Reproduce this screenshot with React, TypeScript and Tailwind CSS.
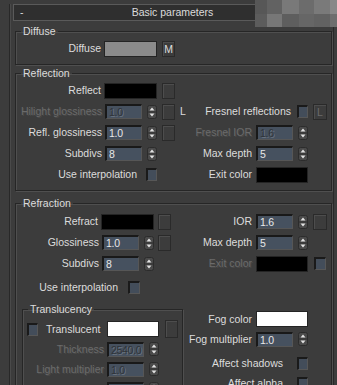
import React from "react";

type Node = React.ReactNode;

const Label = ({ children, off, className = "" }: { children: Node; off?: boolean; className?: string }) => (
  <span
    className={`whitespace-nowrap leading-[13px] ${
      off ? "text-[#6b6b6b] [text-shadow:1px_1px_0_#4a4a4a]" : "text-[#dcdcdc]"
    } ${className}`}
  >
    {children}
  </span>
);

const Swatch = ({ className }: { className: string }) => (
  <div className={`h-[16px] border border-[#242424] ${className}`} />
);

const Arrows = () => (
  <svg width="10" height="14" viewBox="0 0 10 14">
    <rect x="0.5" y="0.5" width="9" height="13" rx="2" fill="#4a4a4a" stroke="#2c2c2c" />
    <line x1="1" y1="7" x2="9" y2="7" stroke="#2c2c2c" />
    <polygon points="2.5,5.5 5,2.5 7.5,5.5" fill="#e2e2e2" />
    <polygon points="2.5,8.5 5,11.5 7.5,8.5" fill="#e2e2e2" />
  </svg>
);

const Spinner = ({ value, off }: { value: string; off?: boolean }) => (
  <div className="flex items-center gap-[5px]">
    <div
      className={`h-[15px] w-[37px] overflow-hidden whitespace-nowrap border-t-2 border-l-2 border-r border-b border-t-[#191919] border-l-[#191919] border-r-[#565656] border-b-[#565656] bg-[#46515f] pl-[2px] leading-[12px] tracking-[-0.3px] ${
        off ? "text-[#2f3338] [text-shadow:1px_1px_0_#6a7480]" : "text-[#e8e8e8]"
      }`}
    >
      {value}
    </div>
    <Arrows />
  </div>
);

const Check = ({ className = "" }: { className?: string }) => (
  <div
    className={`h-[13px] w-[11px] border-t-2 border-l-2 border-r border-b border-t-[#1a1a1a] border-l-[#1a1a1a] border-r-[#575757] border-b-[#575757] bg-[#434d5a] ${className}`}
  />
);

const Btn = ({ children, className = "" }: { children?: Node; className?: string }) => (
  <div
    className={`flex h-[16px] items-center justify-center border border-[#2a2a2a] shadow-[inset_1px_1px_0_#4d4d4d] leading-[12px] ${className}`}
  >
    {children}
  </div>
);

type RowProps = {
  left?: Node;
  btn?: Node;
  l?: Node;
  right?: Node;
  extra?: Node;
  lw?: string;
  bm?: string;
  h?: string;
};

const Row = ({ left, btn, l, right, extra, lw = "w-[141px]", bm = "ml-[5px]", h = "h-[21px]" }: RowProps) => (
  <div className={`flex items-center ${h}`}>
    <div className={`flex items-center justify-end gap-[3px] ${lw}`}>{left}</div>
    <div className={`w-[13px] ${bm}`}>{btn}</div>
    <div className="ml-[5px] w-[10px] text-[#dcdcdc]">{l}</div>
    <div className="ml-auto mr-[4px] flex items-center">
      <div className="flex w-[118px] items-center justify-end gap-[4px]">{right}</div>
      <div className="ml-[5px] w-[14px]">{extra}</div>
    </div>
  </div>
);

const Group = ({ title, children, className = "" }: { title: string; children: Node; className?: string }) => (
  <fieldset
    className={`border border-[#262626] shadow-[1px_1px_0_#4f4f4f,inset_1px_1px_0_#4f4f4f] ${className}`}
  >
    <legend className="ml-[5px] px-[2px] leading-[12px] text-[#dcdcdc]">{title}</legend>
    {children}
  </fieldset>
);

const mosaic = [
  "bg-[#575757]", "bg-[#626262]", "bg-[#797979]", "bg-[#6c6c6c]", "bg-[#7a7a7a]", "bg-[#888888]",
  "bg-[#5c5c5c]", "bg-[#777777]", "bg-[#5e5e5e]", "bg-[#666666]", "bg-[#626262]", "bg-[#6e6e6e]",
];

export default function App() {
  return (
    <div className="relative h-[385px] w-[337px] overflow-hidden bg-[#3c3c3c] font-['Liberation_Sans',Arial,sans-serif] text-[10.5px]">
      <div className="ml-[9px] h-full w-[325px] border-l border-r border-[#282828] pl-[3px] shadow-[inset_1px_0_0_#4a4a4a]">
        {/* rollout header */}
        <div className="mt-[4px] flex h-[17px] w-[319px] items-center border border-[#5a5a5a] bg-[#2f2f2f] px-[6px] text-[#dcdcdc]">
          <span className="w-[10px]">-</span>
          <span className="flex-1 pr-[10px] text-center">Basic parameters</span>
        </div>

        <div className="ml-[2px] w-[317px]">
          <Group title="Diffuse" className="mt-[4px] pb-[7px]">
            <div className="mt-[3px]">
              <Row
                h="h-[17px]"
                left={
                  <>
                    <Label>Diffuse</Label>
                    <Swatch className="w-[53px] bg-[#8b8b8b]" />
                  </>
                }
                btn={<Btn className="w-[13px] text-[#dcdcdc]">M</Btn>}
              />
            </div>
          </Group>

          <Group title="Reflection" className="mt-[2px] pb-[5px]">
            <div className="mt-[1px]">
              <Row
                left={
                  <>
                    <Label>Reflect</Label>
                    <Swatch className="w-[53px] bg-black" />
                  </>
                }
                btn={<Btn className="w-[13px]" />}
              />
              <Row
                left={
                  <>
                    <Label off>Hilight glossiness</Label>
                    <Spinner value="1.0" off />
                  </>
                }
                btn={<Btn className="w-[13px]" />}
                l="L"
                right={
                  <>
                    <Label className="mr-[2px]">Fresnel reflections</Label>
                    <Check />
                  </>
                }
                extra={<Btn className="w-[14px] text-[#6b6b6b]">L</Btn>}
              />
              <Row
                left={
                  <>
                    <Label>Refl. glossiness</Label>
                    <Spinner value="1.0" />
                  </>
                }
                btn={<Btn className="w-[13px]" />}
                right={
                  <>
                    <Label off>Fresnel IOR</Label>
                    <Spinner value="1.6" off />
                  </>
                }
              />
              <Row
                left={
                  <>
                    <Label>Subdivs</Label>
                    <Spinner value="8" />
                  </>
                }
                right={
                  <>
                    <Label>Max depth</Label>
                    <Spinner value="5" />
                  </>
                }
              />
              <Row
                left={
                  <>
                    <Label>Use interpolation</Label>
                    <Check className="ml-[6px]" />
                  </>
                }
                right={
                  <>
                    <Label>Exit color</Label>
                    <Swatch className="w-[52px] bg-black" />
                  </>
                }
              />
            </div>
          </Group>

          <Group title="Refraction" className="mt-[6px] pb-[10px]">
            <div className="mt-[2px]">
              <Row
                lw="w-[138px]"
                bm="ml-[4px]"
                left={
                  <>
                    <Label>Refract</Label>
                    <Swatch className="w-[53px] bg-black" />
                  </>
                }
                btn={<Btn className="w-[13px]" />}
                right={
                  <>
                    <Label>IOR</Label>
                    <Spinner value="1.6" />
                  </>
                }
                extra={<Btn className="w-[14px]" />}
              />
              <Row
                lw="w-[138px]"
                bm="ml-[4px]"
                left={
                  <>
                    <Label>Glossiness</Label>
                    <Spinner value="1.0" />
                  </>
                }
                btn={<Btn className="w-[13px]" />}
                right={
                  <>
                    <Label>Max depth</Label>
                    <Spinner value="5" />
                  </>
                }
              />
              <Row
                lw="w-[138px]"
                bm="ml-[4px]"
                left={
                  <>
                    <Label>Subdivs</Label>
                    <Spinner value="8" />
                  </>
                }
                right={
                  <>
                    <Label off>Exit color</Label>
                    <Swatch className="w-[52px] bg-black" />
                  </>
                }
                extra={<Check className="ml-[1px] w-[12px]" />}
              />
              <div className="mt-[3px]">
                <Row
                  lw="w-[138px]"
                  bm="ml-[4px]"
                  left={
                    <>
                      <Label>Use interpolation</Label>
                      <Check className="ml-[7px] mr-[14px] w-[12px]" />
                    </>
                  }
                />
              </div>
            </div>

            <div className="flex">
              <Group title="Translucency" className="ml-[6px] mt-[5px] w-[161px] pb-[20px]">
                <div className="mt-[4px]">
                  <div className="flex h-[20px] items-center">
                    <div className="flex w-[136px] items-center">
                      <Check className="ml-[4px]" />
                      <Label className="ml-[8px]">Translucent</Label>
                      <Swatch className="ml-auto w-[52px] bg-white" />
                    </div>
                    <Btn className="ml-[6px] h-[18px] w-[13px]" />
                  </div>
                  <div className="flex h-[20px] w-[136px] items-center justify-end gap-[3px]">
                    <Label off>Thickness</Label>
                    <Spinner value="2540.0" off />
                  </div>
                  <div className="flex h-[20px] w-[136px] items-center justify-end gap-[3px]">
                    <Label off>Light multiplier</Label>
                    <Spinner value="1.0" off />
                  </div>
                  <div className="flex h-[20px] w-[136px] items-center justify-end gap-[3px]">
                    <Label off>Scatter coeff</Label>
                    <Spinner value="0.0" off />
                  </div>
                </div>
              </Group>

              <div className="ml-auto mr-[23px] mt-[11px] w-[125px]">
                <div className="flex h-[20px] items-center justify-end gap-[4px]">
                  <Label>Fog color</Label>
                  <Swatch className="w-[52px] bg-white" />
                </div>
                <div className="flex h-[20px] items-center justify-end gap-[4px]">
                  <Label>Fog multiplier</Label>
                  <Spinner value="1.0" />
                </div>
                <div className="mt-[4px] flex h-[20px] items-center justify-end gap-[4px]">
                  <Label className="mr-[10px]">Affect shadows</Label>
                  <Check />
                </div>
                <div className="flex h-[20px] items-center justify-end gap-[4px]">
                  <Label className="mr-[10px]">Affect alpha</Label>
                  <Check />
                </div>
              </div>
            </div>
          </Group>
        </div>
      </div>

      {/* pixelated corner over the header */}
      <div className="absolute right-0 top-0 grid h-[27px] w-[82px] grid-cols-[12px_15px_17px_15px_16px_7px] grid-rows-2">
        {mosaic.map((c, i) => (
          <div key={i} className={c} />
        ))}
      </div>
    </div>
  );
}
